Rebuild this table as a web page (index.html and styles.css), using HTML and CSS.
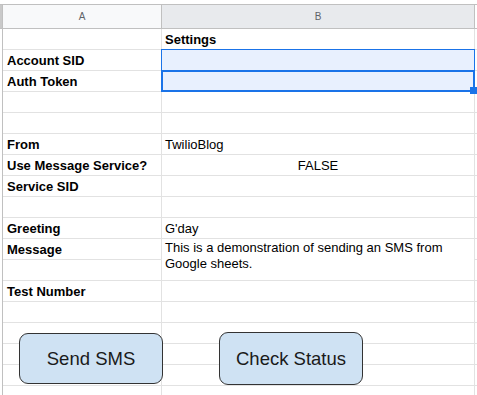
FILE: index.html
```html
<!DOCTYPE html>
<html>
<head>
<meta charset="utf-8">
<link rel="stylesheet" href="styles.css">
</head>
<body>
<div class="sheet">
  <div class="rh hd"></div><div class="c a hd colhd">A</div><div class="c b hd colhd sel-col">B</div><div class="c x hd"></div>

  <div class="rh"></div><div class="c a"></div><div class="c b bold">Settings</div><div class="c x"></div>
  <div class="rh"></div><div class="c a bold">Account SID</div><div class="c b selfill"></div><div class="c x"></div>
  <div class="rh"></div><div class="c a bold">Auth Token</div><div class="c b selfill"></div><div class="c x"></div>
  <div class="rh"></div><div class="c a"></div><div class="c b"></div><div class="c x"></div>
  <div class="rh"></div><div class="c a"></div><div class="c b"></div><div class="c x"></div>
  <div class="rh"></div><div class="c a bold">From</div><div class="c b">TwilioBlog</div><div class="c x"></div>
  <div class="rh"></div><div class="c a bold">Use Message Service?</div><div class="c b center">FALSE</div><div class="c x"></div>
  <div class="rh"></div><div class="c a bold">Service SID</div><div class="c b"></div><div class="c x"></div>
  <div class="rh"></div><div class="c a"></div><div class="c b"></div><div class="c x"></div>
  <div class="rh"></div><div class="c a bold">Greeting</div><div class="c b">G'day</div><div class="c x"></div>
  <div class="rh"></div><div class="c a bold">Message</div><div class="c b merged">This is a demonstration of sending an SMS from Google sheets.</div><div class="c x"></div>
  <div class="rh"></div><div class="c a"></div><div class="c x"></div>
  <div class="rh"></div><div class="c a bold">Test Number</div><div class="c b"></div><div class="c x"></div>
  <div class="rh"></div><div class="c a"></div><div class="c b"></div><div class="c x"></div>
  <div class="rh"></div><div class="c a"></div><div class="c b"></div><div class="c x"></div>
  <div class="rh"></div><div class="c a"></div><div class="c b"></div><div class="c x"></div>
  <div class="rh"></div><div class="c a"></div><div class="c b"></div><div class="c x"></div>
  <div class="rh"></div><div class="c a"></div><div class="c b"></div><div class="c x"></div>

  <div class="range"></div>
  <div class="active"></div>
  <div class="handle"></div>

  <div class="btn btn-send">Send SMS</div>
  <div class="btn btn-check">Check Status</div>
</div>
</body>
</html>
```

FILE: styles.css
```css
* { box-sizing: border-box; }
html, body {
  margin: 0;
  padding: 0;
  background: #ffffff;
  overflow: hidden;
}
.sheet {
  position: relative;
  padding-top: 4px;
  display: grid;
  grid-template-columns: 3px 159px 313px 1fr;
  grid-template-rows: 25px;
  grid-auto-rows: 21px;
  font-family: "Liberation Sans", Arial, sans-serif;
  font-size: 13px;
  color: #000;
  width: 477px;
  height: 395px;
}
.rh {
  grid-column: 1;
  border-right: 1px solid #c0c0c0;
  background: #ffffff;
}
.rh.hd {
  background: #c9c9c9;
  border-top: 1px solid #c0c0c0;
  border-bottom: 1px solid #c0c0c0;
}
.c {
  border-right: 1px solid #e2e2e2;
  border-bottom: 1px solid #e2e2e2;
  padding: 0 3px 1px 3px;
  display: flex;
  align-items: flex-end;
  line-height: 16px;
  white-space: nowrap;
  overflow: hidden;
}
.a { grid-column: 2; padding-left: 4px; }
.b { grid-column: 3; }
.x { grid-column: 4; }
.hd {
  border-top: 1px solid #c0c0c0;
  border-bottom: 1px solid #c0c0c0;
  border-right: 1px solid #c0c0c0;
  background: #f8f9fa;
}
.x.hd { background: #ffffff; }
.colhd {
  justify-content: center;
  align-items: center;
  font-size: 10px;
  color: #5f6368;
  padding: 0;
}
.sel-col { background: #e8eaed; }
.bold { font-weight: bold; }
.center { justify-content: center; }
.selfill { background: #e8f0fe; }
.merged {
  grid-row: span 2;
  align-items: flex-start;
  white-space: normal;
  padding-top: 1px;
}
.range {
  position: absolute;
  left: 161px;
  top: 49px;
  width: 314px;
  height: 43px;
  border: 1px solid #1a73e8;
}
.active {
  position: absolute;
  left: 161px;
  top: 70px;
  width: 314px;
  height: 22px;
  border: 2px solid #1a73e8;
}
.handle {
  position: absolute;
  left: 470px;
  top: 87px;
  width: 7px;
  height: 7px;
  background: #1a73e8;
}
.btn {
  position: absolute;
  display: flex;
  align-items: center;
  justify-content: center;
  background: #cfe2f3;
  border: 1px solid #333333;
  border-radius: 9px;
  font-size: 18.5px;
  color: #1a1a1a;
}
.btn-send {
  left: 19px;
  top: 333px;
  width: 144px;
  height: 51px;
}
.btn-check {
  left: 219px;
  top: 332px;
  width: 144px;
  height: 53px;
}
```
